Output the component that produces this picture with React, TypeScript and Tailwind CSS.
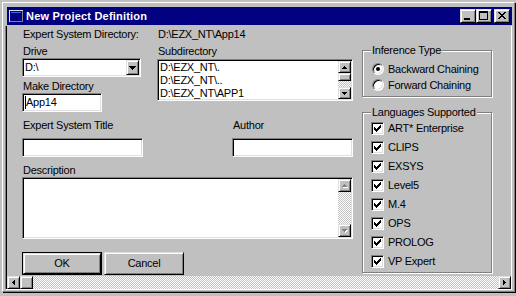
import React from "react";

const sunken =
  "border border-t-[#808080] border-l-[#808080] border-b-white border-r-white shadow-[inset_1px_1px_0_#000,inset_-1px_-1px_0_#dfdfdf]";
const raised =
  "bg-[#c0c0c0] border border-t-[#dfdfdf] border-l-[#dfdfdf] border-b-black border-r-black shadow-[inset_1px_1px_0_#fff,inset_-1px_-1px_0_#808080]";
const dither =
  "bg-[image:repeating-conic-gradient(#fff_0_25%,#c0c0c0_0_50%)] bg-[length:2px_2px]";

type Dir = "up" | "down" | "left" | "right";

// pixel triangle for scroll / combo arrows
function Tri({ dir, n = 3, color = "#000", shadow }: { dir: Dir; n?: number; color?: string; shadow?: string }) {
  const vert = dir === "up" || dir === "down";
  const w = 2 * n - 1;
  const rows = (fill: string, d: number) => {
    const out = [];
    for (let i = 0; i < n; i++) {
      const len = 2 * i + 1;
      const off = n - 1 - i;
      if (dir === "up") out.push(<rect key={i} x={off + d} y={i + d} width={len} height={1} fill={fill} />);
      if (dir === "down") out.push(<rect key={i} x={off + d} y={n - 1 - i + d} width={len} height={1} fill={fill} />);
      if (dir === "left") out.push(<rect key={i} x={i + d} y={off + d} width={1} height={len} fill={fill} />);
      if (dir === "right") out.push(<rect key={i} x={n - 1 - i + d} y={off + d} width={1} height={len} fill={fill} />);
    }
    return out;
  };
  const ex = shadow ? 1 : 0;
  return (
    <svg width={(vert ? w : n) + ex} height={(vert ? n : w) + ex} shapeRendering="crispEdges">
      {shadow && <g>{rows(shadow, 1)}</g>}
      <g>{rows(color, 0)}</g>
    </svg>
  );
}

function ScrollBtn({ dir, size = "w-[13px] h-[12px]", disabled }: { dir: Dir; size?: string; disabled?: boolean }) {
  return (
    <div className={`${size} ${raised} flex items-center justify-center shrink-0`}>
      {disabled ? <Tri dir={dir} color="#808080" shadow="#fff" /> : <Tri dir={dir} />}
    </div>
  );
}

function Check() {
  return (
    <svg width="7" height="7" shapeRendering="crispEdges">
      <rect x="6" y="0" width="1" height="1" />
      <rect x="5" y="1" width="2" height="1" />
      <rect x="0" y="2" width="1" height="1" />
      <rect x="4" y="2" width="3" height="1" />
      <rect x="0" y="3" width="2" height="1" />
      <rect x="3" y="3" width="3" height="1" />
      <rect x="0" y="4" width="5" height="1" />
      <rect x="1" y="5" width="3" height="1" />
      <rect x="2" y="6" width="1" height="1" />
    </svg>
  );
}

function CheckRow({ label }: { label: string }) {
  return (
    <div className="h-[19px] flex items-center pl-[8px]">
      <div className={`w-[13px] h-[13px] bg-white ${sunken} flex items-center justify-center`}>
        <Check />
      </div>
      <span className="ml-[4px]">{label}</span>
    </div>
  );
}

function RadioRow({ label, on }: { label: string; on?: boolean }) {
  return (
    <div className="h-[16px] flex items-center pl-[9px]">
      <div className="w-[12px] h-[12px] rounded-full bg-white border border-t-[#808080] border-l-[#808080] border-b-white border-r-white shadow-[inset_1px_1px_0_#000,inset_-1px_-1px_0_#dfdfdf] flex items-center justify-center">
        {on && <div className="w-[4px] h-[4px] rounded-full bg-black" />}
      </div>
      <span className="ml-[4px]">{label}</span>
    </div>
  );
}

function Group({ title, className, children }: { title: string; className: string; children: React.ReactNode }) {
  return (
    <div className={`border border-[#808080] shadow-[inset_1px_1px_0_#fff,1px_1px_0_#fff] ${className}`}>
      <div className="-mt-[7px] ml-[8px] w-fit px-[1px] h-[13px] bg-[#c0c0c0]">{title}</div>
      {children}
    </div>
  );
}

function TitleBtn({ kind }: { kind: "min" | "max" | "close" }) {
  const x = [];
  if (kind === "close") {
    for (let i = 0; i < 7; i++) {
      x.push(<rect key={"a" + i} x={3 + i} y={2 + i} width={2} height={1} />);
      x.push(<rect key={"b" + i} x={9 - i} y={2 + i} width={2} height={1} />);
    }
  }
  return (
    <div className={`w-[16px] h-[14px] ${raised}`}>
      <svg width="14" height="12" shapeRendering="crispEdges">
        {kind === "min" && <rect x="3" y="8" width="6" height="2" />}
        {kind === "max" && (
          <g>
            <rect x="2" y="1" width="9" height="2" />
            <rect x="2" y="3" width="1" height="7" />
            <rect x="10" y="3" width="1" height="7" />
            <rect x="2" y="9" width="9" height="1" />
          </g>
        )}
        {x}
      </svg>
    </div>
  );
}

function WinIcon() {
  return (
    <svg width="14" height="12" shapeRendering="crispEdges">
      <rect x="0" y="0" width="14" height="12" fill="#dfdfdf" />
      <rect x="1" y="1" width="13" height="11" fill="#808080" />
      <rect x="1" y="1" width="12" height="10" fill="#000080" />
      <rect x="2" y="2" width="10" height="1" fill="#3a6ee8" />
    </svg>
  );
}

export default function App() {
  return (
    <div className="w-[516px] h-[296px] bg-[#c0c0c0] overflow-hidden font-['Liberation_Sans',Arial,sans-serif] text-[11px] leading-[13px] tracking-[-0.25px] text-black">
      <div className="mt-[2px] ml-[2px] w-[513px] h-[290px] flex flex-col border border-t-white border-l-white border-r-[#808080] border-b-[#808080] shadow-[1px_1px_0_#000] pt-[4px] pl-[4px] pr-[2px]">
        {/* Titelleiste */}
        <div className="h-[18px] shrink-0 bg-[#000080] flex items-center px-[2px]">
          <WinIcon />
          <span className="ml-[3px] text-white font-bold tracking-[0.2px]">New Project Definition</span>
          <div className="ml-auto flex items-center">
            <TitleBtn kind="min" />
            <TitleBtn kind="max" />
            <div className="w-[2px]" />
            <TitleBtn kind="close" />
          </div>
        </div>

        {/* Client-Bereich */}
        <div className="-ml-[2px] mt-[1px] h-[264px] flex border-l border-l-[#808080] border-r border-r-white border-b border-b-white">
          <div className="flex-1 flex flex-col border-l border-l-black">
            <div className="flex-1 flex pl-[15px]">
              {/* linke Spalte */}
              <div className="w-[331px] flex flex-col">
                <div className="mt-[2px] h-[13px] flex">
                  <div className="w-[135px] pl-[1px]">Expert System Directory:</div>
                  <div className="pl-[1px]">D:\EZX_NT\App14</div>
                </div>

                <div className="flex">
                  <div className="w-[135px] flex flex-col">
                    <div className="mt-[4px] h-[13px] pl-[1px]">Drive</div>
                    <div className={`w-[119px] h-[19px] bg-white ${sunken} p-px flex`}>
                      <div className="flex-1 pl-[1px] leading-[15px]">D:\</div>
                      <div className={`w-[13px] ${raised} flex items-center justify-center`}>
                        <Tri dir="down" n={4} />
                      </div>
                    </div>
                    <div className="mt-[3px] h-[13px] pl-[1px]">Make Directory</div>
                    <div className={`w-[80px] h-[19px] bg-white ${sunken} p-px flex items-center`}>
                      <span className="ml-[1px] w-px h-[13px] bg-black" />
                      <span>App14</span>
                    </div>
                  </div>
                  <div className="flex flex-col">
                    <div className="mt-[4px] h-[13px] pl-[1px]">Subdirectory</div>
                    <div className={`mt-[1px] w-[196px] h-[42px] bg-white ${sunken} p-px flex`}>
                      <div className="flex-1 pl-[1px]">
                        <div>D:\EZX_NT\.</div>
                        <div>D:\EZX_NT\..</div>
                        <div>D:\EZX_NT\APP1</div>
                      </div>
                      <div className="w-[13px] flex flex-col">
                        <ScrollBtn dir="up" />
                        <div className={`h-[8px] ${raised}`} />
                        <div className={`flex-1 ${dither}`} />
                        <ScrollBtn dir="down" />
                      </div>
                    </div>
                  </div>
                </div>

                <div className="mt-[7px] flex">
                  <div className="w-[210px] flex flex-col">
                    <div className="h-[13px] pl-[1px]">Expert System Title</div>
                    <div className={`mt-[6px] w-[121px] h-[19px] bg-white ${sunken}`} />
                  </div>
                  <div className="flex flex-col">
                    <div className="h-[13px] pl-[1px]">Author</div>
                    <div className={`mt-[6px] w-[121px] h-[19px] bg-white ${sunken}`} />
                  </div>
                </div>

                <div className="mt-[7px] h-[13px] pl-[1px]">Description</div>
                <div className={`h-[62px] bg-white ${sunken} p-px flex justify-end`}>
                  <div className="w-[13px] flex flex-col">
                    <ScrollBtn dir="up" size="w-[13px] h-[13px]" disabled />
                    <div className={`flex-1 ${dither}`} />
                    <ScrollBtn dir="down" size="w-[13px] h-[13px]" disabled />
                  </div>
                </div>

                <div className="mt-[13px] flex gap-[2px]">
                  <div className="w-[80px] h-[23px] border border-black">
                    <div className={`h-full ${raised} flex items-center justify-center`}>OK</div>
                  </div>
                  <div className={`w-[80px] h-[23px] ${raised} flex items-center justify-center`}>Cancel</div>
                </div>
              </div>

              {/* rechte Spalte */}
              <div className="ml-[9px] w-[130px] mt-[24px] flex flex-col">
                <Group title="Inference Type" className="h-[47px]">
                  <div className="mt-[4px]">
                    <RadioRow label="Backward Chaining" on />
                    <RadioRow label="Forward Chaining" />
                  </div>
                </Group>
                <Group title="Languages Supported" className="mt-[15px] h-[161px]">
                  <CheckRow label="ART* Enterprise" />
                  <CheckRow label="CLIPS" />
                  <CheckRow label="EXSYS" />
                  <CheckRow label="Level5" />
                  <CheckRow label="M.4" />
                  <CheckRow label="OPS" />
                  <CheckRow label="PROLOG" />
                  <CheckRow label="VP Expert" />
                </Group>
              </div>
            </div>

            {/* horizontale Scrollbar */}
            <div className="h-[13px] flex">
              <ScrollBtn dir="left" size="w-[13px] h-[13px]" />
              <div className={`w-[13px] h-[13px] ${raised}`} />
              <div className={`flex-1 ${dither}`} />
              <ScrollBtn dir="right" size="w-[13px] h-[13px]" />
            </div>
          </div>
        </div>
      </div>
    </div>
  );
}
